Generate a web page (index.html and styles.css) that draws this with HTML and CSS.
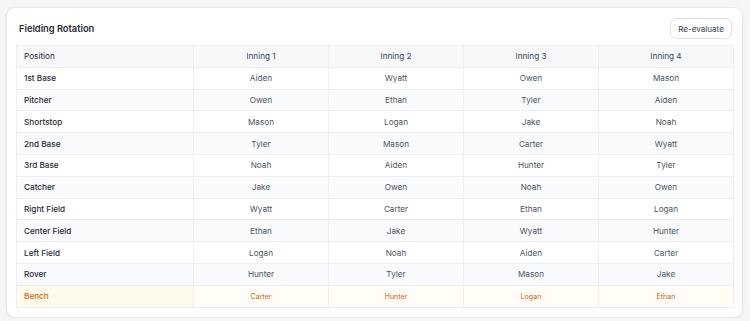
FILE: index.html
```html
<!DOCTYPE html>
<html>
<head>
<meta charset="utf-8">
<link rel="stylesheet" href="styles.css">
</head>
<body>
<div class="card">
  <div class="card-header">
    <h2 class="title">Fielding Rotation</h2>
    <button class="btn">Re-evaluate</button>
  </div>
  <table class="grid">
    <colgroup>
      <col class="col-pos"><col class="col-inn"><col class="col-inn"><col class="col-inn"><col class="col-inn">
    </colgroup>
    <thead>
      <tr><th class="pos">Position</th><th>Inning 1</th><th>Inning 2</th><th>Inning 3</th><th>Inning 4</th></tr>
    </thead>
    <tbody>
      <tr><td class="pos">1st Base</td><td>Aiden</td><td>Wyatt</td><td>Owen</td><td>Mason</td></tr>
      <tr><td class="pos">Pitcher</td><td>Owen</td><td>Ethan</td><td>Tyler</td><td>Aiden</td></tr>
      <tr><td class="pos">Shortstop</td><td>Mason</td><td>Logan</td><td>Jake</td><td>Noah</td></tr>
      <tr><td class="pos">2nd Base</td><td>Tyler</td><td>Mason</td><td>Carter</td><td>Wyatt</td></tr>
      <tr><td class="pos">3rd Base</td><td>Noah</td><td>Aiden</td><td>Hunter</td><td>Tyler</td></tr>
      <tr><td class="pos">Catcher</td><td>Jake</td><td>Owen</td><td>Noah</td><td>Owen</td></tr>
      <tr><td class="pos">Right Field</td><td>Wyatt</td><td>Carter</td><td>Ethan</td><td>Logan</td></tr>
      <tr><td class="pos">Center Field</td><td>Ethan</td><td>Jake</td><td>Wyatt</td><td>Hunter</td></tr>
      <tr><td class="pos">Left Field</td><td>Logan</td><td>Noah</td><td>Aiden</td><td>Carter</td></tr>
      <tr><td class="pos">Rover</td><td>Hunter</td><td>Tyler</td><td>Mason</td><td>Jake</td></tr>
      <tr class="bench"><td class="pos">Bench</td><td>Carter</td><td>Hunter</td><td>Logan</td><td>Ethan</td></tr>
    </tbody>
  </table>
</div>
</body>
</html>
```
FILE: styles.css
```css
html, body {
  margin: 0;
  padding: 0;
  background: #f4f5f7;
  font-family: Inter, "Noto Sans", sans-serif;
}
body {
  padding: 7px 7px 0 6px;
}
.card {
  width: 737px;
  box-sizing: border-box;
  background: #ffffff;
  border: 1px solid #e5e7eb;
  border-radius: 9px;
  box-shadow: 0 1px 3px rgba(0,0,0,0.06);
  padding: 10px 9px 9px 9px;
}
.card-header {
  display: flex;
  justify-content: space-between;
  align-items: center;
  margin-bottom: 6px;
  padding-left: 3px;
}
.title {
  margin: 0;
  font-size: 9.3px;
  font-weight: 600;
  color: #1f2937;
}
.btn {
  font-family: Inter, "Noto Sans", sans-serif;
  font-size: 8.1px;
  color: #374151;
  background: #ffffff;
  border: 1px solid #dfe2e6;
  border-radius: 6px;
  width: 62px;
  height: 21px;
  padding: 0;
  margin-right: 1px;
}
.grid {
  width: 717px;
  border-collapse: collapse;
  table-layout: fixed;
  font-size: 8.2px;
}
.col-pos { width: 177px; }
.col-inn { width: 135px; }
.grid th, .grid td {
  border: 1px solid #eceef1;
  height: 20.8px;
  padding: 0 7px;
  text-align: center;
  color: #4b5563;
  font-weight: 400;
}
.grid th {
  background: #f7f8fa;
  color: #374151;
}
.grid .pos {
  text-align: left;
  color: #1f2937;
  background: #f9fafb;
  font-weight: 500;
}
.grid th.pos {
  background: #f7f8fa;
  font-weight: 400;
  color: #1f2937;
}
.grid tbody tr:nth-child(odd) .pos {
  background: #ffffff;
}
.grid tbody tr:nth-child(even) td {
  background: #f9fafb;
}
.grid tbody tr.bench td {
  background: #fffdf5;
  color: #cf5f17;
  font-size: 7.1px;
}
.grid tbody tr.bench td.pos {
  background: #fffbeb;
  font-size: 8.2px;
  font-weight: 500;
  color: #d26313;
}
```
